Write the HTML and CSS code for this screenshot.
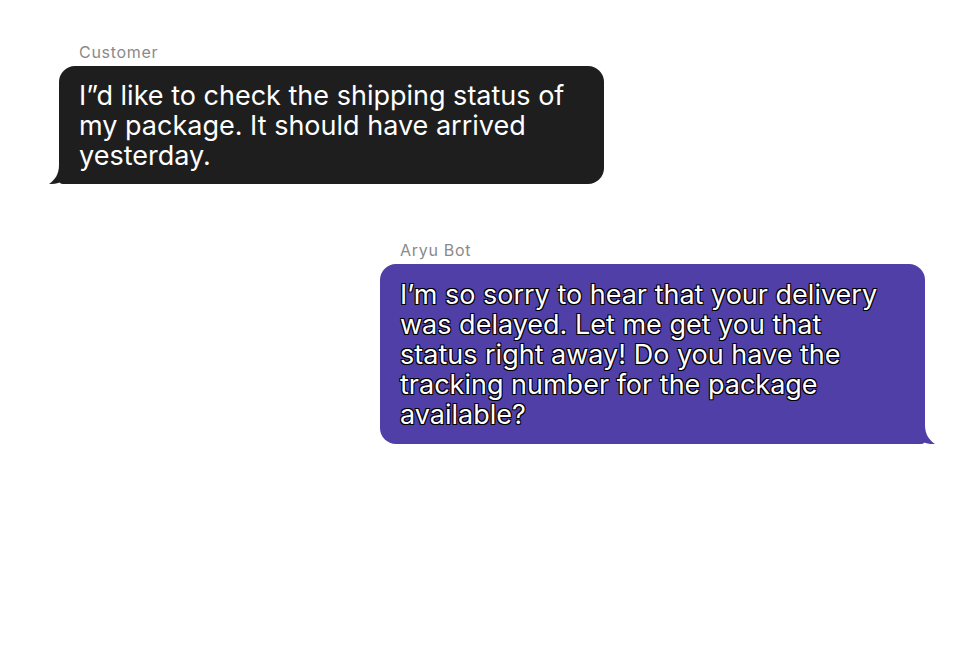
FILE: index.html
```html
<!DOCTYPE html>
<html lang="en">
<head>
  <meta charset="UTF-8">
  <meta name="viewport" content="width=device-width, initial-scale=1.0">
  <title>Chat</title>
  <link rel="stylesheet" href="styles.css">
</head>
<body>
  <div class="chat">
    <div class="message customer">
      <div class="sender">Customer</div>
      <div class="bubble">
        I”d like to check the shipping status of my package. It should have arrived yesterday.
        <svg class="tail" width="24" height="20" viewBox="0 0 24 20"><path d="M10 0 C10 9 6 15 0 19 C6 19.5 11 18 15 15 C17 17 20 19 24 19 L24 0 Z"/></svg>
      </div>
    </div>

    <div class="message bot">
      <div class="sender">Aryu Bot</div>
      <div class="bubble">
        I’m so sorry to hear that your delivery was delayed. Let me get you that status right away! Do you have the tracking number for the package available?
        <svg class="tail" width="24" height="20" viewBox="0 0 24 20"><path d="M14 0 C14 9 18 15 24 19 C18 19.5 13 18 9 15 C7 17 4 19 0 19 L0 0 Z"/></svg>
      </div>
    </div>
  </div>
</body>
</html>
```

FILE: styles.css
```css
body {
  margin: 0;
  background-color: #ffffff;
  font-family: Inter, "Noto Sans", sans-serif;
}
.chat {
  display: flex;
  flex-direction: column;
  gap: 57px;
  padding: 43px 48px 0 59px;
}
.message {
  width: 545px;
}
.bot {
  align-self: flex-end;
}
.sender {
  font-size: 16px;
  line-height: 19px;
  color: #8a8a8a;
  letter-spacing: 0.7px;
  padding-left: 20px;
  margin-bottom: 4px;
}
.bubble {
  position: relative;
  font-size: 27px;
  line-height: 30px;
  color: #ffffff;
  padding: 15px 36px 13px 20px;
  border-radius: 16px;
}
.customer .bubble {
  background-color: #1e1e1e;
  border-bottom-left-radius: 4px;
}
.bot .bubble {
  padding: 16px 36px 14px 20px;
  background-color: #4f3fa6;
  border-bottom-right-radius: 4px;
  text-shadow: -1px -1px 0 #000, 1px -1px 0 #000, -1px 1px 0 #000, 1px 1px 0 #000;
}
.tail {
  position: absolute;
  bottom: -1px;
}
.customer .tail {
  left: -10px;
  fill: #1e1e1e;
}
.bot .tail {
  right: -10px;
  fill: #4f3fa6;
}
```
